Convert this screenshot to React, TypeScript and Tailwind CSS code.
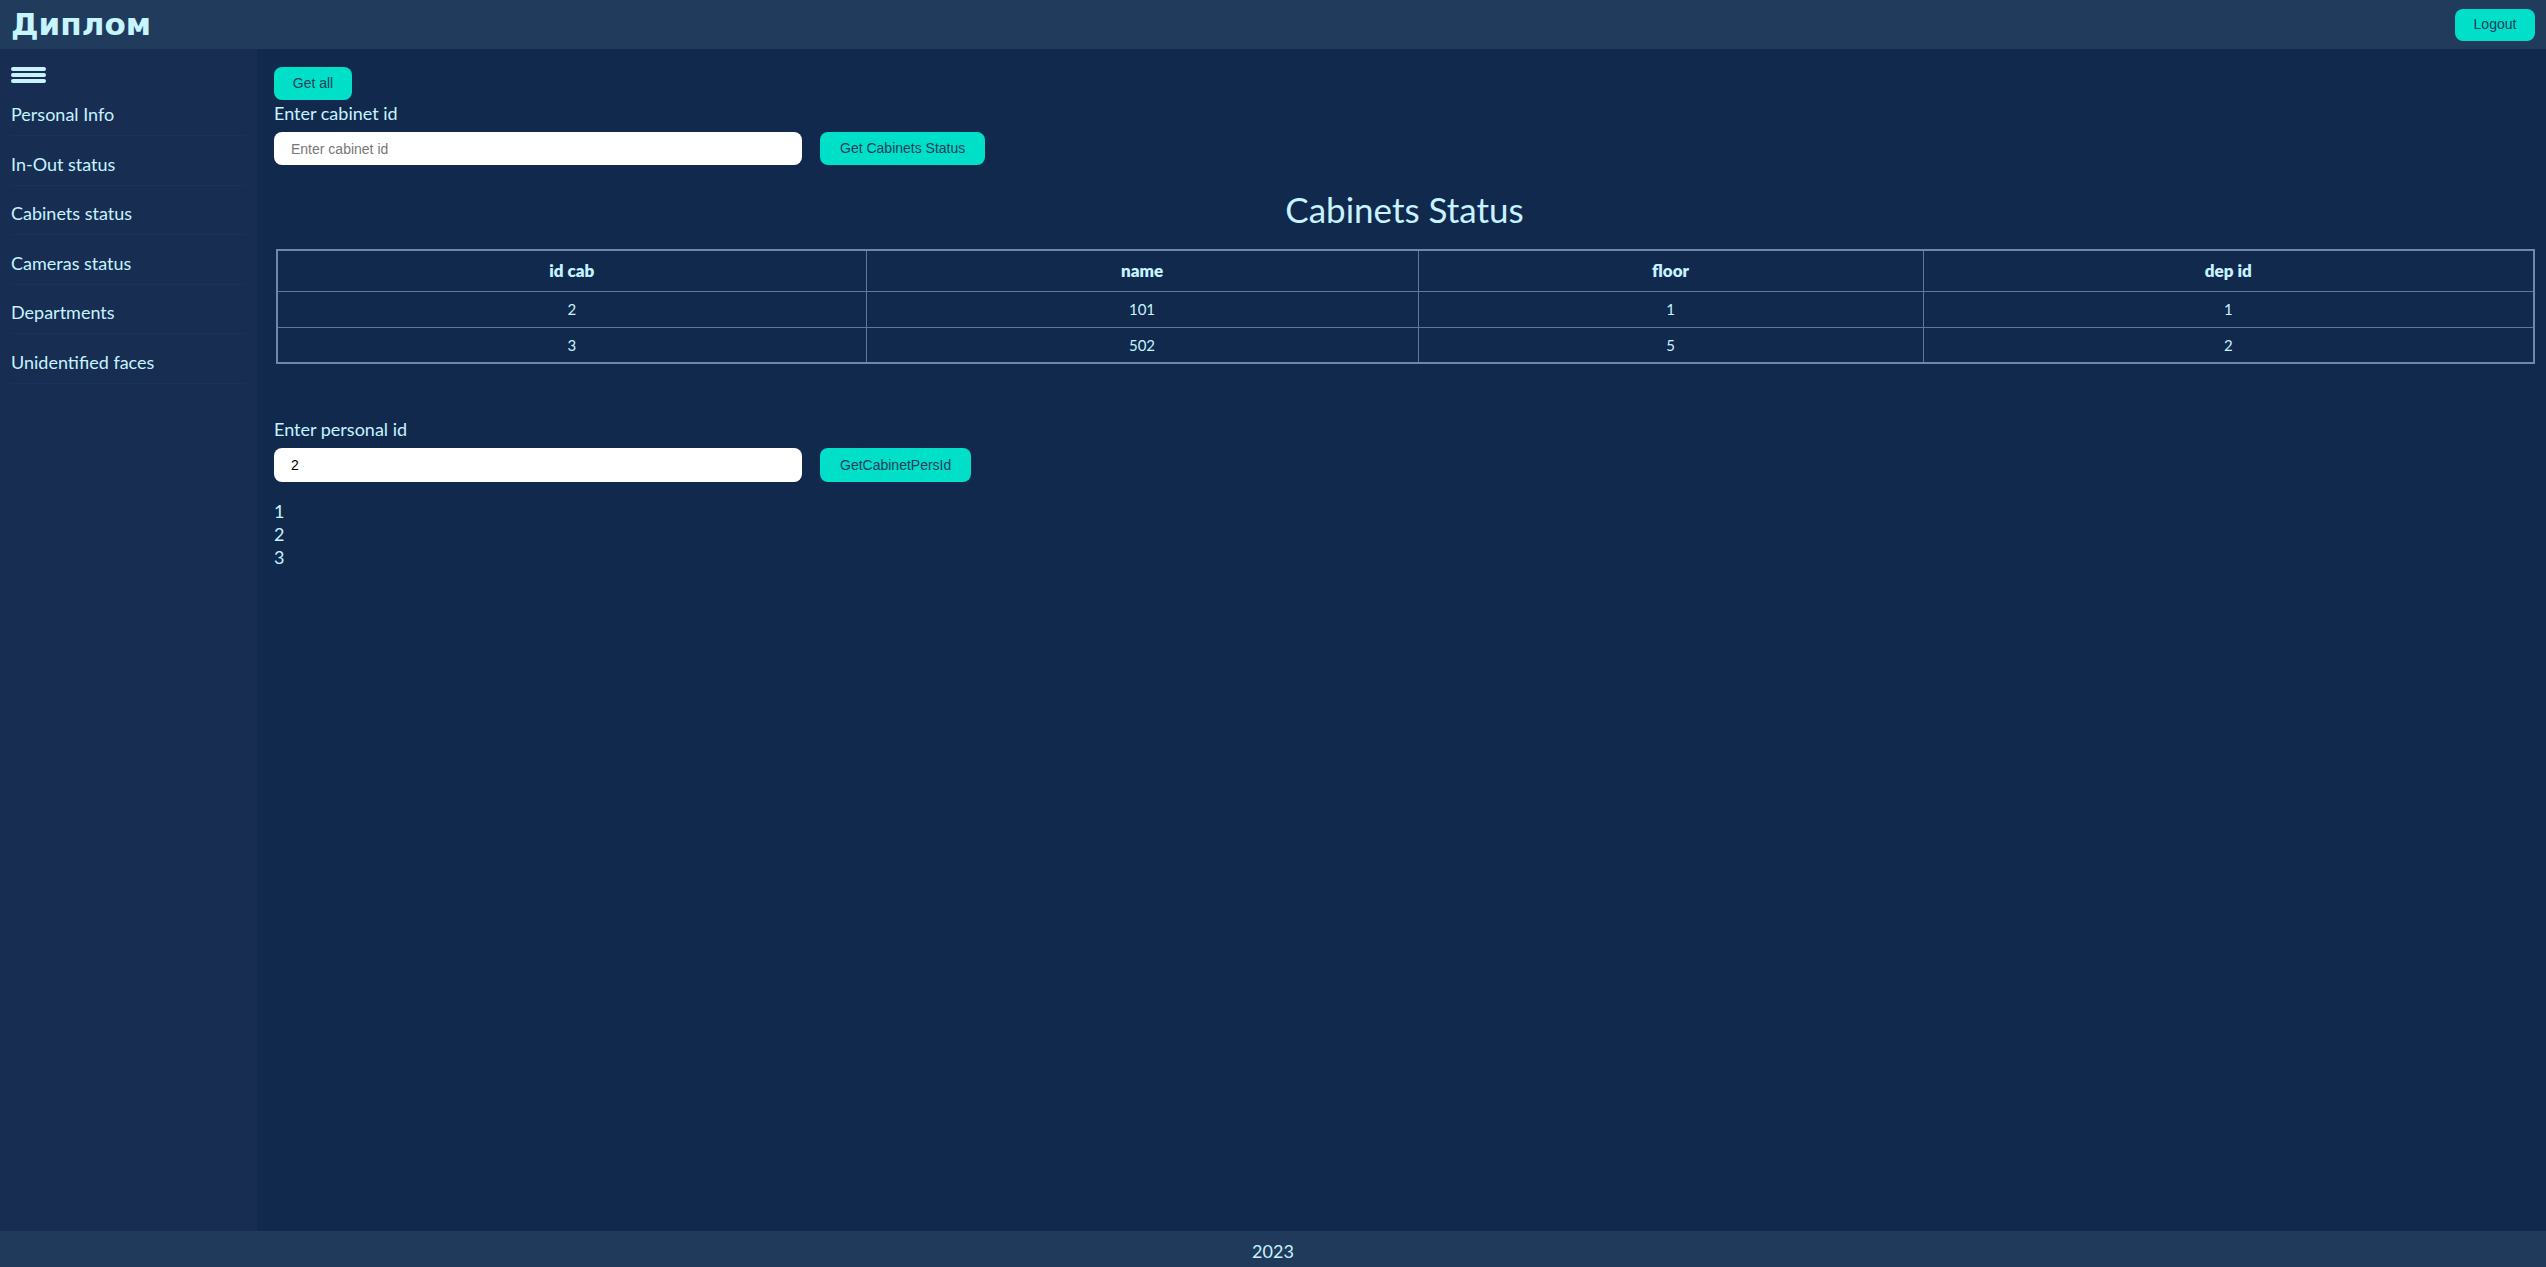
import React from "react";

const navItems = [
  "Personal Info",
  "In-Out status",
  "Cabinets status",
  "Cameras status",
  "Departments",
  "Unidentified faces",
];

const rows = [
  { id: "2", name: "101", floor: "1", dep: "1" },
  { id: "3", name: "502", floor: "5", dep: "2" },
];

export default function App() {
  return (
    <div className="flex h-screen flex-col bg-[#11294d] font-['Lato','Open_Sans',sans-serif] text-[#c6f3ff]">
      {/* HEADER */}
      <header className="flex h-[49px] shrink-0 items-center justify-between bg-[#213b5c] pl-[11px] pr-[11px]">
        <h1 className="font-['DejaVu_Sans',sans-serif] text-[31px] font-bold leading-none text-[#c6f5ff]">
          Диплом
        </h1>
        <button className="h-[32px] w-[80px] rounded-[8px] bg-[#00dfc8] font-['Liberation_Sans',Arial,sans-serif] text-[14px] text-[#1d3c5c]">
          Logout
        </button>
      </header>

      <div className="flex min-h-0 flex-1">
        {/* SIDEBAR */}
        <aside className="w-[257px] shrink-0 bg-[#172d51] pt-[18px]">
          <div className="ml-[11px] flex w-[35px] flex-col gap-[2px]">
            <span className="h-[4px] rounded-full bg-[#c6f3ff]" />
            <span className="h-[4px] rounded-full bg-[#c6f3ff]" />
            <span className="h-[4px] rounded-full bg-[#c6f3ff]" />
          </div>
          <nav className="mt-[3.5px]">
            {navItems.map((item) => (
              <div key={item} className="px-[11px]">
                <div className="border-b border-[#1b3356] pb-[10px] pt-[16.5px] text-[18px] leading-[22px]">
                  {item}
                </div>
              </div>
            ))}
          </nav>
        </aside>

        {/* MAIN */}
        <main className="flex-1 pl-[17px] pr-[13px] pt-[18px]">
          <button className="h-[33px] w-[78px] rounded-[8px] bg-[#00dfc8] font-['Liberation_Sans',Arial,sans-serif] text-[14px] text-[#1d3c5c]">
            Get all
          </button>
          <div className="mt-[2px] text-[18px] leading-[22px]">Enter cabinet id</div>
          <div className="mt-[8px] flex items-center gap-[18px]">
            <input
              placeholder="Enter cabinet id"
              className="h-[33px] w-[528px] rounded-[8px] bg-white px-[17px] font-['Liberation_Sans',Arial,sans-serif] text-[14px] text-black outline-none placeholder:text-[#777]"
            />
            <button className="h-[33px] rounded-[8px] bg-[#00dfc8] px-[20px] font-['Liberation_Sans',Arial,sans-serif] text-[14px] text-[#1d3c5c]">
              Get Cabinets Status
            </button>
          </div>

          <h2 className="mt-[22px] text-center text-[35px] leading-[44px]">Cabinets Status</h2>

          <table className="ml-[2px] mt-[18px] w-[2257px] table-fixed border-collapse border-2 border-[#6f87a8]">
            <colgroup>
              <col className="w-[589px]" />
              <col className="w-[552px]" />
              <col className="w-[505px]" />
              <col className="w-[611px]" />
            </colgroup>
            <thead>
              <tr className="h-[41px]">
                <th className="border border-[#5f7899] text-[17px] font-extrabold">id cab</th>
                <th className="border border-[#5f7899] text-[17px] font-extrabold">name</th>
                <th className="border border-[#5f7899] text-[17px] font-extrabold">floor</th>
                <th className="border border-[#5f7899] text-[17px] font-extrabold">dep id</th>
              </tr>
            </thead>
            <tbody>
              {rows.map((r) => (
                <tr key={r.id} className="h-[36px] text-[15px]">
                  <td className="border border-[#5f7899] text-center">{r.id}</td>
                  <td className="border border-[#5f7899] text-center">{r.name}</td>
                  <td className="border border-[#5f7899] text-center">{r.floor}</td>
                  <td className="border border-[#5f7899] text-center">{r.dep}</td>
                </tr>
              ))}
            </tbody>
          </table>

          <div className="mt-[54px] text-[18px] leading-[22px]">Enter personal id</div>
          <div className="mt-[8px] flex items-center gap-[18px]">
            <input
              defaultValue="2"
              className="h-[34px] w-[528px] rounded-[8px] bg-white px-[17px] font-['Liberation_Sans',Arial,sans-serif] text-[14px] text-black outline-none"
            />
            <button className="h-[34px] rounded-[8px] bg-[#00dfc8] px-[20px] font-['Liberation_Sans',Arial,sans-serif] text-[14px] text-[#1d3c5c]">
              GetCabinetPersId
            </button>
          </div>

          <ul className="mt-[18px] text-[18px] leading-[23px]">
            <li>1</li>
            <li>2</li>
            <li>3</li>
          </ul>
        </main>
      </div>

      {/* FOOTER */}
      <footer className="flex h-[36px] shrink-0 items-center justify-center bg-[#1f3a5a] pt-[5px] text-[18px]">
        2023
      </footer>
    </div>
  );
}
